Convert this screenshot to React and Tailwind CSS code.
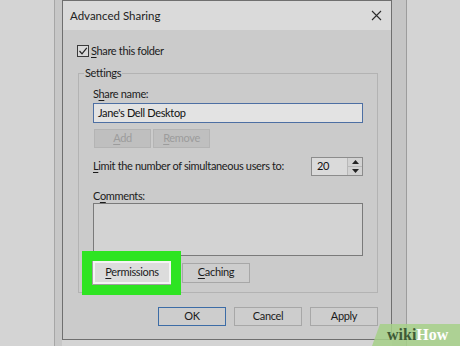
import React from 'react';

function Btn({ children, className = '' }) {
  return (
    <div className={`flex items-center justify-center text-[#1b1b1b] ${className}`}>
      {children}
    </div>
  );
}

export default function App() {
  return (
    <div
      className="relative flex w-[460px] h-[346px] overflow-hidden bg-[#d4d4d4] text-[11px] tracking-[-0.35px] text-[#1b1b1b]"
      style={{ fontFamily: 'Lato, "Noto Sans", sans-serif' }}
    >
      {/* behind window edge */}
      <div className="w-[54px] shrink-0" />
      <div className="w-[8px] shrink-0 h-full border-l border-[#a6a6a6] bg-[#c7c7c7]" />

      {/* Dialog */}
      <div className="w-[330px] shrink-0 h-[340px] border border-[#6f6f6f] flex flex-col">
        {/* Title bar */}
        <div className="h-[29px] shrink-0 bg-[#dadada] flex items-center justify-between pl-[7px] pr-[8px]">
          <span className="text-[11.5px] tracking-normal text-[#222]">Advanced Sharing</span>
          <svg width="11" height="11" viewBox="0 0 11 11" className="mr-[1px]">
            <path d="M1 1 L10 10 M10 1 L1 10" stroke="#2a2a2a" strokeWidth="1.1" />
          </svg>
        </div>

        {/* Body */}
        <div className="flex-1 bg-[#cbcbcb] flex flex-col">
          {/* Share this folder */}
          <div className="flex items-center mt-[15px] ml-[14px] h-[12px]">
            <div className="w-[12px] h-[12px] border border-[#3a3a3a] bg-[#d9d9d9] flex items-center justify-center">
              <svg width="10" height="10" viewBox="0 0 10 10">
                <path d="M1.5 5 L4 7.8 L8.8 1.8" fill="none" stroke="#222" strokeWidth="1.2" />
              </svg>
            </div>
            <span className="ml-[2px]">
              <span className="underline underline-offset-2">S</span>hare this folder
            </span>
          </div>

          {/* Settings group */}
          <div className="relative mt-[16px] ml-[15px] mr-[13px] border border-[#b3b3b3] px-[14px] pb-[8px] flex flex-col">
            <span className="absolute -top-[9px] left-[5px] px-[1px] bg-[#cbcbcb] leading-[16px]">Settings</span>

            <div className="mt-[12px] h-[16px] leading-[16px]">
              S<span className="underline underline-offset-2">h</span>are name:
            </div>
            <div className="mt-[1px] h-[20px] border border-[#4d6fa3] bg-[#e3e3e3] flex items-center pl-[4px] text-[#111]">
              Jane's Dell Desktop
            </div>

            <div className="mt-[6px] flex gap-[2px] pl-[1px]">
              <Btn className="w-[57px] h-[19px] bg-[#bfbfbf] border border-[#b4b4b4] !text-[#9c9c9c]">
                <span><span className="underline underline-offset-2">A</span>dd</span>
              </Btn>
              <Btn className="w-[57px] h-[19px] bg-[#bfbfbf] border border-[#b4b4b4] !text-[#9c9c9c]">
                <span><span className="underline underline-offset-2">R</span>emove</span>
              </Btn>
            </div>

            <div className="mt-[9px] h-[19px] flex items-center justify-between">
              <span>
                <span className="underline underline-offset-2">L</span>imit the number of simultaneous users to:
              </span>
              <div className="w-[52px] h-[19px] border border-[#8c8c8c] bg-[#dadada] flex">
                <div className="flex-1 flex items-center pl-[5px] text-[#111]">20</div>
                <div className="w-[15px] flex flex-col border-l border-[#b8b8b8] bg-[#d2d2d2]">
                  <div className="flex-1 flex items-center justify-center border-b border-[#b8b8b8]">
                    <svg width="7" height="4" viewBox="0 0 7 4"><path d="M0 4 L3.5 0 L7 4Z" fill="#222" /></svg>
                  </div>
                  <div className="flex-1 flex items-center justify-center">
                    <svg width="7" height="4" viewBox="0 0 7 4"><path d="M0 0 L3.5 4 L7 0Z" fill="#222" /></svg>
                  </div>
                </div>
              </div>
            </div>

            <div className="mt-[13px] h-[14px] leading-[14px]">
              C<span className="underline underline-offset-2">o</span>mments:
            </div>
            <div className="h-[53px] border border-[#7a7a7a] bg-[#d3d3d3]" />

            <div className="mt-[5px] flex items-center">
              <Btn className="w-[78px] h-[23px] bg-[#dcdcdc] border-2 border-[#f4f4f4] outline outline-1 outline-[#a0a0a0]">
                <span><span className="underline underline-offset-2">P</span>ermissions</span>
              </Btn>
              <Btn className="ml-[11px] w-[68px] h-[20px] bg-[#cdcdcd] border border-[#a7a7a7]">
                <span><span className="underline underline-offset-2">C</span>aching</span>
              </Btn>
            </div>
          </div>

          {/* Bottom buttons */}
          <div className="mt-[14px] flex justify-end gap-[8px] pr-[13px]">
            <Btn className="w-[68px] h-[19px] bg-[#cdcdcd] border border-[#3c6ca6]">OK</Btn>
            <Btn className="w-[68px] h-[19px] bg-[#cdcdcd] border border-[#a7a7a7]">Cancel</Btn>
            <Btn className="w-[68px] h-[19px] bg-[#cdcdcd] border border-[#a7a7a7]">Apply</Btn>
          </div>
        </div>
      </div>

      {/* right side: behind window */}
      <div className="w-[15px] shrink-0 h-full bg-[#c5c5c5] border-r border-[#9c9c9c]" />
      <div className="flex-1" />

      {/* green highlight around Permissions */}
      <div className="absolute left-[82px] top-[251px] w-[99px] h-[44px] border-[10px] border-[#2ee422]" />

      {/* watermark */}
      <div className="absolute right-0 bottom-0 w-[88px] h-[22px]">
        <svg width="88" height="22" viewBox="0 0 88 22" className="absolute inset-0">
          <path d="M8 0 H88 V22 H0 Z" fill="#a6d088" opacity="0.85" />
        </svg>
        <div
          className="relative h-full flex items-center pl-[15px] text-[16px] font-bold tracking-normal leading-none"
          style={{ fontFamily: '"Liberation Serif", serif' }}
        >
          <span className="text-[#3e5a36]">wiki</span>
          <span className="text-white">How</span>
        </div>
      </div>
    </div>
  );
}
